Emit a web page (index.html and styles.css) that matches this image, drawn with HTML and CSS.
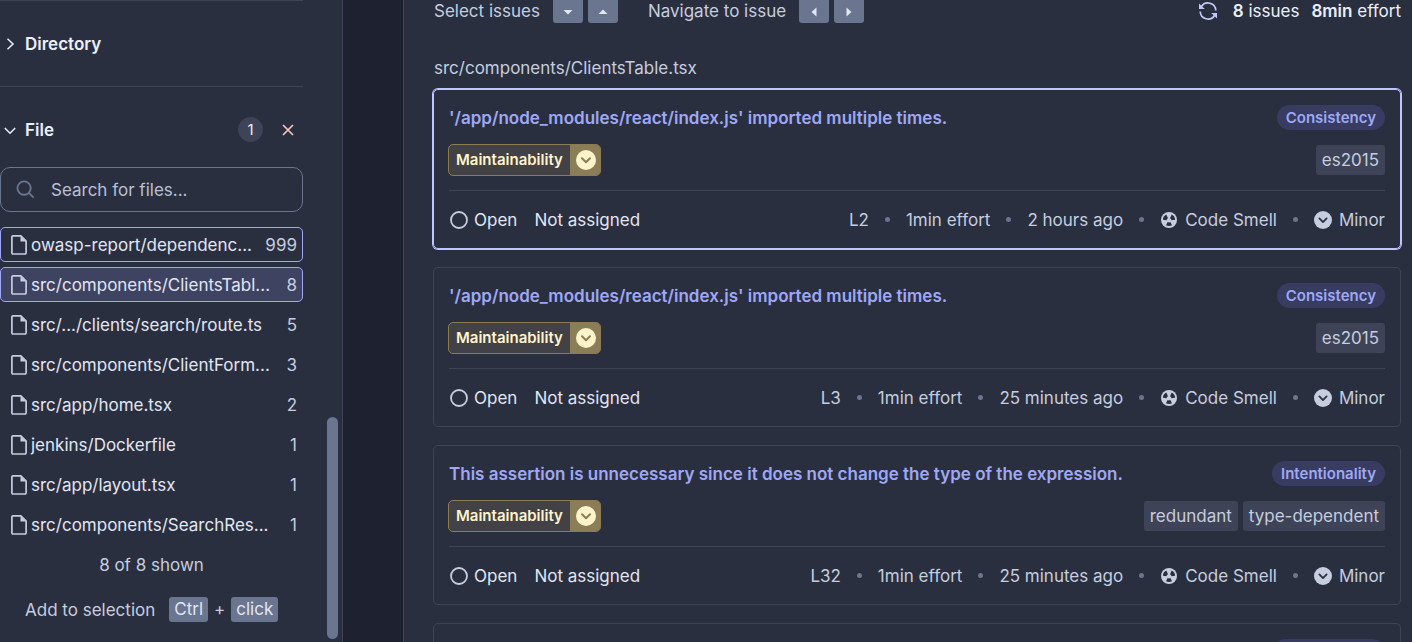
FILE: index.html
```html
<!DOCTYPE html>
<html lang="en">
<head>
<meta charset="utf-8">
<title>Issues</title>
<link rel="stylesheet" href="styles.css">
</head>
<body>
<svg class="sprite" aria-hidden="true">
  <symbol id="file" viewBox="0 0 16 20"><path d="M2 .9h7.8l5.3 5.3v11.600a1.200 1.200 0 0 1-1.200 1.200H2A1.100 1.100 0 0 1 .9 17.900V2A1.100 1.100 0 0 1 2 .9z" fill="none" stroke="currentColor" stroke-width="1.700"/><path d="M9.500 1v5.500H15z" fill="currentColor"/></symbol>
  <symbol id="check-down" viewBox="0 0 20 20"><circle cx="10" cy="10" r="10" fill="currentColor"/><path d="M6 8.300l4 4 4-4" fill="none" stroke="var(--mark)" stroke-width="2" stroke-linecap="round" stroke-linejoin="round"/></symbol>
  <symbol id="ring" viewBox="0 0 18 18"><circle cx="9" cy="9" r="8" fill="none" stroke="currentColor" stroke-width="1.800"/></symbol>
  <symbol id="smell" viewBox="0 0 16 16"><circle cx="8" cy="8" r="8" fill="currentColor"/><path d="M5.300 2.600L7 6.200A2.400 2.400 0 0 0 5.600 8.300L1.900 7.800A6.200 6.200 0 0 1 5.300 2.600zM10.700 2.600L9 6.200A2.400 2.400 0 0 1 10.400 8.300L14.100 7.800A6.200 6.200 0 0 0 10.700 2.600zM6.600 10.100A2.500 2.500 0 0 0 9.400 10.100L11 13.200A6.200 6.200 0 0 1 5 13.200z" fill="var(--mark)"/></symbol>
</svg>
<div class="page">
  <aside class="sidebar">
    <div class="facets">
      <section class="facet facet-closed">
        <button class="facet-toggle"><svg class="chev" viewBox="0 0 12 12"><path d="M3.500.8L9 6l-5.500 5.200"/></svg>Directory</button>
      </section>
      <section class="facet">
        <div class="facet-head">
          <button class="facet-toggle"><svg class="chev" viewBox="0 0 12 12"><path d="M.8 4L6 9.200 11.200 4"/></svg>File</button>
          <span class="count">1</span>
          <button class="clear" aria-label="Clear file filter"><svg viewBox="0 0 12 12"><path d="M1 1l10 10M11 1L1 11"/></svg></button>
        </div>
        <label class="search">
          <svg viewBox="0 0 20 20"><circle cx="8.500" cy="8.500" r="7"/><path d="M13.600 13.600L18.500 18.500"/></svg>
          <input type="text" placeholder="Search for files..." aria-label="Search for files">
        </label>
        <div class="files">
          <button class="file outlined"><svg><use href="#file"/></svg><span class="name">owasp-report/dependenc...</span><span class="num">999</span></button>
          <button class="file outlined active"><svg><use href="#file"/></svg><span class="name">src/components/ClientsTabl...</span><span class="num">8</span></button>
          <button class="file"><svg><use href="#file"/></svg><span class="name">src/.../clients/search/route.ts</span><span class="num">5</span></button>
          <button class="file"><svg><use href="#file"/></svg><span class="name">src/components/ClientForm...</span><span class="num">3</span></button>
          <button class="file"><svg><use href="#file"/></svg><span class="name">src/app/home.tsx</span><span class="num">2</span></button>
          <button class="file"><svg><use href="#file"/></svg><span class="name">jenkins/Dockerfile</span><span class="num">1</span></button>
          <button class="file"><svg><use href="#file"/></svg><span class="name">src/app/layout.tsx</span><span class="num">1</span></button>
          <button class="file"><svg><use href="#file"/></svg><span class="name">src/components/SearchRes...</span><span class="num">1</span></button>
        </div>
        <p class="shown">8 of 8 shown</p>
        <p class="hint">Add to selection <span class="keys"><kbd>Ctrl</kbd>+<kbd>click</kbd></span></p>
      </section>
    </div>
    <div class="scroll-thumb"></div>
  </aside>
  <main class="main">
    <header class="toolbar">
      <span>Select issues</span>
      <span class="arrows"><kbd class="arrow"><svg viewBox="0 0 10 10"><path d="M.5 3h9L5 7.500z"/></svg></kbd><kbd class="arrow"><svg viewBox="0 0 10 10"><path d="M.5 7h9L5 2.500z"/></svg></kbd></span>
      <span class="nav-label">Navigate to issue</span>
      <span class="arrows"><kbd class="arrow"><svg viewBox="0 0 10 10"><path d="M7.500.5v9L2.500 5z"/></svg></kbd><kbd class="arrow"><svg viewBox="0 0 10 10"><path d="M2.500.5v9L7.500 5z"/></svg></kbd></span>
      <div class="totals">
        <button class="reload" aria-label="Reload"><svg viewBox="0 0 18 18"><path d="M2.300 4.800A7.800 7.800 0 0 1 16.800 8.500M15.700 13.200A7.800 7.800 0 0 1 1.200 9.500"/><path class="tip" d="M0 1.500V7h5.800zM18 16.500V11h-5.800z"/></svg></button>
        <span><b>8</b> issues</span><span><b>8min</b> effort</span>
      </div>
    </header>
    <h2 class="path">src/components/ClientsTable.tsx</h2>
    <div class="issues">
      <article class="issue selected">
        <div class="row"><a href="#" class="title">'/app/node_modules/react/index.js' imported multiple times.</a><span class="pill">Consistency</span></div>
        <div class="row"><span class="quality"><span class="q-name">Maintainability</span><span class="q-level"><svg><use href="#check-down"/></svg></span></span><span class="tags"><span class="tag">es2015</span></span></div>
        <div class="row foot"><div class="state"><button><svg><use href="#ring"/></svg>Open</button><button>Not assigned</button></div>
          <ul class="meta"><li>L2</li><li>1min effort</li><li>2 hours ago</li><li><svg class="smell"><use href="#smell"/></svg>Code Smell</li><li class="severity"><svg><use href="#check-down"/></svg>Minor</li></ul></div>
      </article>
      <article class="issue">
        <div class="row"><a href="#" class="title">'/app/node_modules/react/index.js' imported multiple times.</a><span class="pill">Consistency</span></div>
        <div class="row"><span class="quality"><span class="q-name">Maintainability</span><span class="q-level"><svg><use href="#check-down"/></svg></span></span><span class="tags"><span class="tag">es2015</span></span></div>
        <div class="row foot"><div class="state"><button><svg><use href="#ring"/></svg>Open</button><button>Not assigned</button></div>
          <ul class="meta"><li>L3</li><li>1min effort</li><li>25 minutes ago</li><li><svg class="smell"><use href="#smell"/></svg>Code Smell</li><li class="severity"><svg><use href="#check-down"/></svg>Minor</li></ul></div>
      </article>
      <article class="issue">
        <div class="row"><a href="#" class="title">This assertion is unnecessary since it does not change the type of the expression.</a><span class="pill">Intentionality</span></div>
        <div class="row"><span class="quality"><span class="q-name">Maintainability</span><span class="q-level"><svg><use href="#check-down"/></svg></span></span><span class="tags"><span class="tag">redundant</span><span class="tag">type-dependent</span></span></div>
        <div class="row foot"><div class="state"><button><svg><use href="#ring"/></svg>Open</button><button>Not assigned</button></div>
          <ul class="meta"><li>L32</li><li>1min effort</li><li>25 minutes ago</li><li><svg class="smell"><use href="#smell"/></svg>Code Smell</li><li class="severity"><svg><use href="#check-down"/></svg>Minor</li></ul></div>
      </article>
      <article class="issue">
        <div class="row"><span class="pill pill-empty"></span></div>
      </article>
    </div>
  </main>
</div>
</body>
</html>
```
FILE: styles.css
```css
:root {
  --surface: #2a2f40;
  --gutter: #1d2130;
  --line: #3e4357;
  --text: #c5cddf;
  --strong: #ebf0fa;
  --accent: #9ea8f5;
  --key: #6a7590;
}
* { box-sizing: border-box; }
body {
  margin: 0;
  height: 100vh;
  overflow: hidden;
  background: var(--gutter);
  color: var(--text);
  font: 17px/24px Inter, "Liberation Sans", sans-serif;
}
button { font: inherit; color: inherit; background: none; border: 0; padding: 0; }
p, h2, ul { margin: 0; padding: 0; font-weight: 400; font-size: inherit; }
svg { display: block; flex: none; }
kbd { font: inherit; }
.sprite { position: absolute; width: 0; height: 0; }
.page { display: flex; gap: 60px; height: 100%; overflow: hidden; }

.sidebar {
  display: flex;
  flex: none;
  background: var(--surface);
  border-right: 1px solid var(--line);
  padding-right: 4px;
}
.facets { width: 303px; margin-right: 24px; }
.facet-closed { border: solid var(--line); border-width: 1px 0; padding: 30px 0; }
.facet-closed .facet-toggle { height: 25px; }
.facet-toggle { display: flex; align-items: center; gap: 9px; padding-left: 4px; color: var(--strong); font-weight: 600; }
.chev { width: 12px; height: 12px; fill: none; stroke: currentColor; stroke-width: 1.500; }
.facet-head { display: flex; align-items: center; height: 25px; margin-top: 30px; }
.count { width: 25px; margin-left: auto; border-radius: 13px; background: #3e4357; color: var(--strong); text-align: center; font-size: 15px; line-height: 25px; }
.clear { margin: 0 9px 0 19px; }
.clear svg { width: 12px; height: 12px; fill: none; stroke: #f5c4c4; stroke-width: 1.700; }
.search {
  display: flex;
  align-items: center;
  gap: 16px;
  height: 45px;
  margin: 25px 0 15px;
  padding: 0 15px;
  border: 1px solid var(--key);
  border-radius: 10px;
}
.search svg { width: 19px; height: 19px; fill: none; stroke: var(--key); stroke-width: 1.900; }
.search input { flex: 1; min-width: 0; border: 0; padding: 0; background: none; font: inherit; color: inherit; outline: 0; }
.search input::placeholder { color: #b7c0d6; opacity: 1; }
.files { display: flex; flex-direction: column; gap: 5px; }
.file {
  display: flex;
  align-items: center;
  height: 35px;
  padding: 0 5px 0 10px;
  border: 1px solid transparent;
  border-radius: 5px;
  text-align: left;
}
.file svg { width: 16px; height: 20px; margin-right: 4px; }
.outlined { border-color: #9ea8f5; }
.active { background: #3f4362; }
.name { flex: 1; white-space: nowrap; color: #e1e6f3; }
.num { padding-left: 6px; }
.shown { margin-top: 11px; text-align: center; }
.hint { display: flex; align-items: center; gap: 14px; height: 25px; margin: 20px 0 0 25px; }
.keys { display: flex; gap: 6px; line-height: 25px; }
.keys kbd { padding: 0 5px; border-radius: 3px; background: var(--key); color: #e1e6f3; }
.scroll-thumb { align-self: flex-end; width: 11px; height: 222px; margin-bottom: 3px; border-radius: 6px; background: var(--key); }

.main {
  flex: 1;
  min-width: 0;
  background: var(--surface);
  border-left: 1px solid var(--line);
  padding: 0 11px 0 29px;
}
.toolbar { display: flex; align-items: center; height: 22px; padding-left: 1px; }
.arrows { display: flex; gap: 5px; align-self: stretch; margin-left: 13px; }
.arrow { display: flex; align-items: center; justify-content: center; width: 30px; height: 23px; border-radius: 0 0 3px 3px; background: var(--key); }
.arrow svg { width: 10px; height: 10px; fill: #e1e6f3; }
.nav-label { margin-left: 30px; }
.totals { display: flex; align-items: center; gap: 12px; margin-left: auto; color: var(--strong); }
.totals b { font-weight: 600; }
.reload { margin-right: 4px; }
.reload svg { width: 18px; height: 18px; fill: none; stroke: #c0c8fa; stroke-width: 1.700; }
.reload .tip { fill: #c0c8fa; stroke: none; }
.path { margin: 34px 0 9px 1px; }
.issues { display: flex; flex-direction: column; gap: 18px; }
.issue {
  display: flex;
  flex-direction: column;
  gap: 14px;
  min-height: 160px;
  flex: none;
  padding: 15px 15px 0;
  border: 1px solid var(--line);
  border-radius: 5px;
}
.selected { border-color: #bdc6ff; box-shadow: 0 0 0 1px #bdc6ff; }
.row { display: flex; align-items: center; justify-content: space-between; }
.title { color: var(--accent); font-weight: 600; text-decoration: none; }
.pill { height: 25px; padding: 0 9px; border-radius: 13px; background: #373c60; color: var(--accent); font-size: 15px; font-weight: 600; line-height: 25px; }
.pill-empty { width: 112px; margin-left: auto; }
.quality { display: flex; height: 32px; margin-left: -1px; border: 1px solid #8a7b50; border-radius: 5px; overflow: hidden; color: #fff3cc; font-size: 15px; font-weight: 600; line-height: 30px; background: #424146; }
.q-name { padding: 0 7px; }
.q-level { display: flex; align-items: center; padding: 0 4px 0 6px; background: #8a7d58; --mark: #8a7d58; }
.q-level svg { width: 20px; height: 20px; }
.tags { display: flex; gap: 5px; }
.tag { padding: 0 6px; border-radius: 3px; background: #3e4357; line-height: 30px; }
.foot { flex: 1; border-top: 1px solid var(--line); }
.state, .state button { display: flex; align-items: center; color: #e1e6f3; }
.state { gap: 17px; }
.state button { gap: 6px; }
.state svg { width: 18px; height: 18px; margin-left: 1px; color: var(--text); }
.meta { display: flex; list-style: none; --mark: var(--surface); }
.meta li { display: flex; align-items: center; }
.meta li + li::before { content: ""; width: 5px; height: 5px; margin: 0 16px; border-radius: 50%; background: var(--key); }
.meta .smell { width: 16px; height: 16px; margin: 0 8px 0 1px; }
.severity svg { width: 18px; height: 18px; margin-right: 7px; }
```
